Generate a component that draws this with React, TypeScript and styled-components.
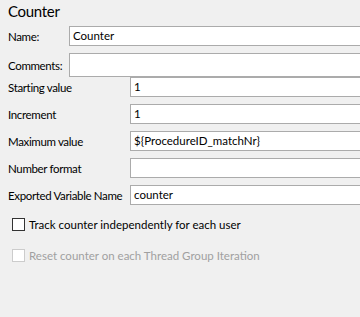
import React from "react";
import styled, { createGlobalStyle } from "styled-components";

const Global = createGlobalStyle`
  html, body { margin: 0; padding: 0; background: #f0f0f0; }
  body { font-family: Lato, "Noto Sans", sans-serif; color: #000; }
  * { box-sizing: border-box; }
`;

const Panel = styled.div`
  width: 360px;
  height: 317px;
  overflow: hidden;
  background: #f0f0f0;
  display: flex;
  flex-direction: column;
`;

const Title = styled.div`
  font-size: 15px;
  letter-spacing: -0.3px;
  line-height: 18px;
  padding: 2px 0 0 8px;
  height: 26px;
`;

const Grid = styled.div<{ $label: number; $gap: number }>`
  display: grid;
  grid-template-columns: ${(p) => p.$label}px 1fr;
  column-gap: ${(p) => p.$gap}px;
  padding-left: 8px;
  align-items: center;
`;

const LabelCell = styled.div<{ $mt?: number }>`
  font-size: 11.5px;
  letter-spacing: -0.35px;
  white-space: nowrap;
  margin-top: ${(p) => p.$mt ?? 0}px;
`;

const Field = styled.div<{ $h?: number; $mt?: number }>`
  height: ${(p) => p.$h ?? 20}px;
  margin-top: ${(p) => p.$mt ?? 0}px;
  background: #fff;
  border: 1px solid #ababab;
  border-right: none;
  font-size: 11.5px;
  line-height: 18px;
  padding-left: 3px;
  white-space: nowrap;
  overflow: hidden;
`;

const Checks = styled.div`
  display: flex;
  flex-direction: column;
  gap: 17px;
  padding: 12px 0 0 12px;
`;

const CheckRow = styled.div<{ $disabled?: boolean }>`
  display: flex;
  align-items: center;
  gap: 4px;
  height: 14px;
  font-size: 11.5px;
  color: ${(p) => (p.$disabled ? "#a0a0a0" : "#000")};
`;

const Box = styled.span<{ $disabled?: boolean }>`
  width: 13px;
  height: 13px;
  background: #fff;
  border: 1px solid ${(p) => (p.$disabled ? "#cccccc" : "#333333")};
  flex: none;
`;

const top = [
  { label: "Name:", value: "Counter", h: 20, mt: 0 },
  { label: "Comments:", value: "", h: 24, mt: 7 },
];

const rows = [
  { label: "Starting value", value: "1", mt: 0 },
  { label: "Increment", value: "1", mt: 7 },
  { label: "Maximum value", value: "${ProcedureID_matchNr}", mt: 7 },
  { label: "Number format", value: "", mt: 7 },
  { label: "Exported Variable Name", value: "counter", mt: 7 },
];

export default function App() {
  return (
    <>
      <Global />
      <Panel>
        <Title>Counter</Title>
        <Grid $label={54} $gap={7}>
          {top.map((r) => (
            <React.Fragment key={r.label}>
              <LabelCell $mt={r.mt}>{r.label}</LabelCell>
              <Field $h={r.h} $mt={r.mt}>{r.value}</Field>
            </React.Fragment>
          ))}
        </Grid>
        <Grid $label={115} $gap={7}>
          {rows.map((r) => (
            <React.Fragment key={r.label}>
              <LabelCell $mt={r.mt}>{r.label}</LabelCell>
              <Field $mt={r.mt}>{r.value}</Field>
            </React.Fragment>
          ))}
        </Grid>
        <Checks>
          <CheckRow>
            <Box />
            Track counter independently for each user
          </CheckRow>
          <CheckRow $disabled>
            <Box $disabled />
            Reset counter on each Thread Group Iteration
          </CheckRow>
        </Checks>
      </Panel>
    </>
  );
}
